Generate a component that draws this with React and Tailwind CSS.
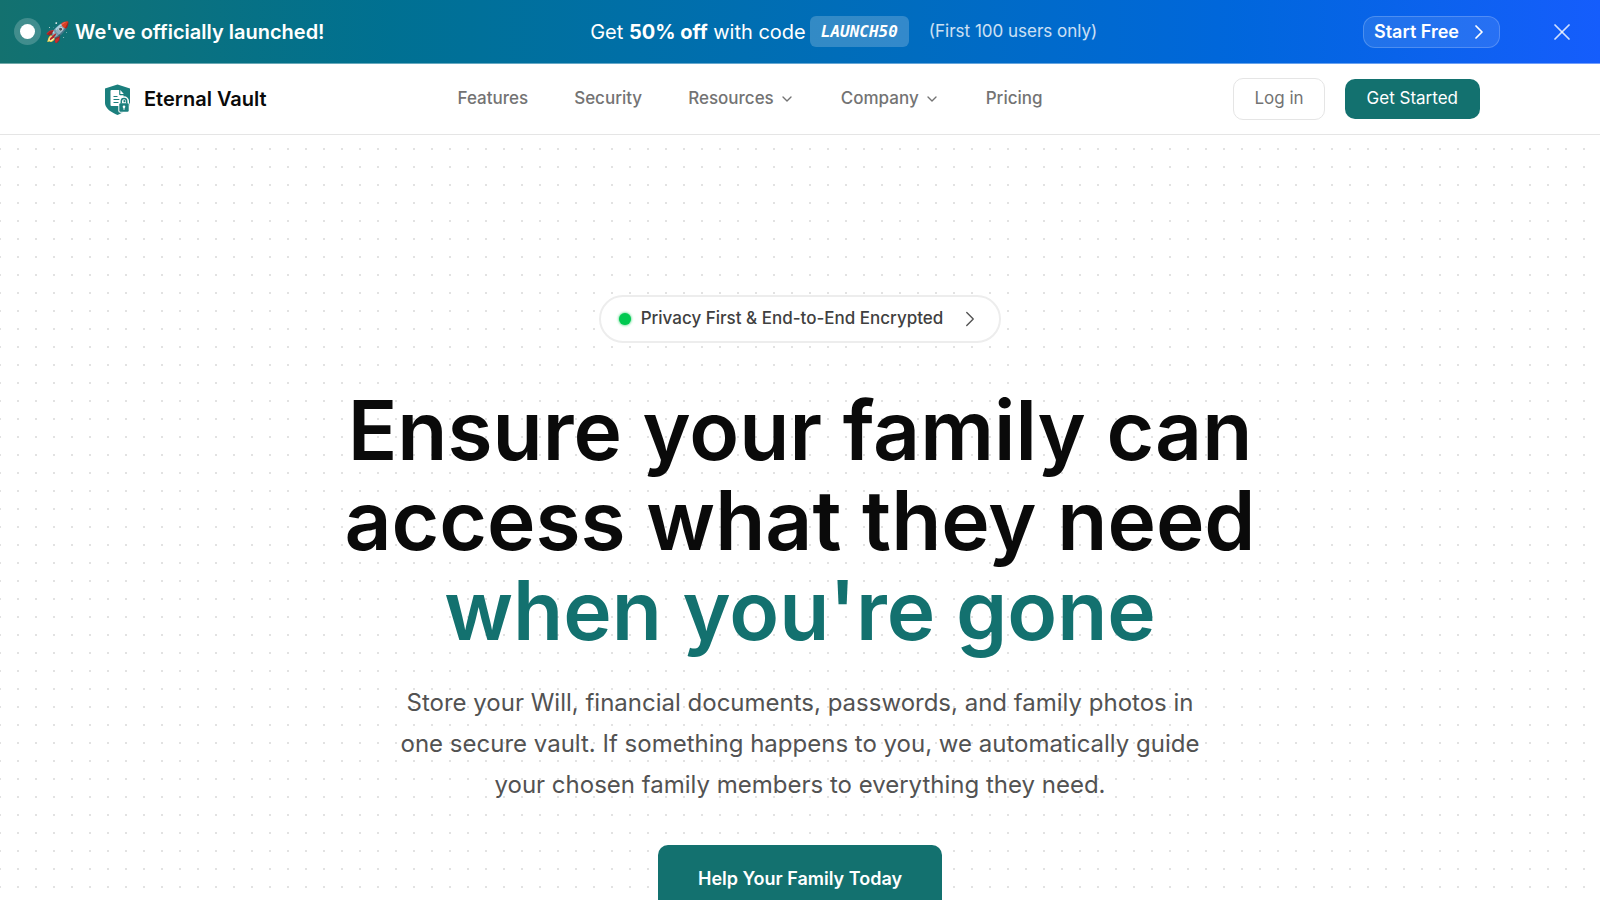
import { ChevronDown, ChevronRight, X } from "lucide-react";

function Logo() {
  return (
    <svg viewBox="0 0 25 31" className="h-[31px] w-[25px]" aria-hidden="true">
      <path d="M12.500 0.500 25 4.500V19c0 5.500-6.500 9.500-12.500 12C6.500 28.500 0 24.500 0 19V4.500Z" fill="#1b7f7d" />
      <path d="M5.500 7a1 1 0 0 1 1-1h7.700v4.200a1 1 0 0 0 1 1h3.300V22H6.500a1 1 0 0 1-1-1Z" fill="#fff" />
      <path d="M15.300 6v4h3.500Z" fill="#fff" />
      <path d="M8.500 12.500h4M8.500 15.500h7M8.500 18.500h5" stroke="#1b7f7d" strokeWidth="1.200" />
      <path d="M15.800 19.500v-2.200a3.200 3.200 0 0 1 6.400 0v2.200" fill="none" stroke="#fff" strokeWidth="3.600" />
      <rect x="13.300" y="18.300" width="11.400" height="10.400" rx="2" fill="#fff" />
      <rect x="14.300" y="19.300" width="9.400" height="8.400" rx="1.200" fill="#1b7f7d" />
      <path d="M16.300 19.500v-2.200a2.700 2.700 0 0 1 5.400 0v2.200" fill="none" stroke="#1b7f7d" strokeWidth="1.500" />
      <circle cx="19" cy="22.700" r="1.300" fill="#fff" />
      <path d="M19 22.700v3" stroke="#fff" strokeWidth="1.100" />
    </svg>
  );
}

function Banner() {
  return (
    <div className="flex h-16 items-center justify-between border-b border-white/40 bg-linear-to-r from-[#13716f] to-[#155dfc] bg-origin-border pr-6 pl-[14px] whitespace-nowrap text-white">
      <div className="flex items-center gap-1">
        <span className="flex size-[27px] items-center justify-center rounded-full bg-white/20">
          <span className="size-[15px] rounded-full bg-white" />
        </span>
        <p className="text-[20px] font-semibold">🚀 We've officially launched!</p>
      </div>
      <div className="flex items-center">
        <p className="text-[20px]">
          Get <strong className="font-bold">50% off</strong> with code
        </p>
        <code className="ml-1 flex h-[31px] items-center rounded-md bg-white/20 px-[11px] font-['DejaVu_Sans_Mono',monospace] text-[16px] font-bold italic">
          LAUNCH50
        </code>
        <span className="ml-5 text-[17px] text-white/80">(First 100 users only)</span>
      </div>
      <div className="flex items-center gap-12">
        <a href="#start" className="flex h-8 items-center gap-2 rounded-xl border border-white/20 bg-white/10 pr-2 pl-[10px] text-[18px] font-semibold">
          Start Free
          <ChevronRight className="size-6" strokeWidth={1.75} />
        </a>
        <button type="button" aria-label="Dismiss" className="text-white/80">
          <X className="size-7" strokeWidth={1.5} />
        </button>
      </div>
    </div>
  );
}

function Header() {
  return (
    <header className="flex h-[71px] items-center justify-between border-b border-[#e5e5e5] bg-white pr-[120px] pl-[105px] text-[17px]">
      <a href="#home" className="flex items-center gap-[14px] text-[20px] font-semibold text-[#0a0a0a]">
        <Logo />
        Eternal Vault
      </a>
      <nav className="flex items-center gap-[46px] font-medium text-[#737373]">
        <a href="#features">Features</a>
        <a href="#security">Security</a>
        <button type="button" className="flex items-center gap-[5px]">
          Resources
          <ChevronDown className="size-4" />
        </button>
        <button type="button" className="flex items-center gap-[5px]">
          Company
          <ChevronDown className="size-4" />
        </button>
        <a href="#pricing">Pricing</a>
      </nav>
      <div className="flex items-center gap-5">
        <a href="#login" className="flex h-[42px] items-center rounded-[10px] border border-[#e5e5e5] px-5 text-[#737373]">
          Log in
        </a>
        <a href="#signup" className="flex h-10 items-center rounded-[10px] bg-[#13716f] px-[22px] text-white">
          Get Started
        </a>
      </div>
    </header>
  );
}

export default function App() {
  return (
    <div className="h-screen overflow-hidden bg-white font-['Inter',sans-serif]">
      <Banner />
      <Header />
      <main className="flex flex-col items-center bg-[radial-gradient(circle,#e2e2e2_1px,transparent_1px)] bg-size-[18px_18px] bg-position-[-9px_5px] pt-40 text-center">
        <a href="#privacy" className="flex h-12 items-center gap-[10px] rounded-full border-2 border-[#ededed] bg-white pr-4 pl-[18px] text-[17px] font-medium text-[#404040]">
          <span className="size-3 rounded-full bg-[#00c950] shadow-[0_0_3px_#00c950]" />
          Privacy First &amp; End-to-End Encrypted
          <ChevronRight className="ml-1 size-[26px] text-[#525252]" strokeWidth={1.25} />
        </a>
        <h1 className="mt-[43px] text-[82px] leading-[90px] font-semibold whitespace-nowrap text-[#0a0a0a]">
          Ensure your family can
          <br />
          access what they need
          <br />
          <span className="text-[#13716f]">when you're gone</span>
        </h1>
        <p className="mt-[26px] max-w-[820px] text-[24px] leading-[41px] text-[#525252]">
          Store your Will, financial documents, passwords, and family photos in one secure vault. If something happens to you, we automatically guide your chosen family members to everything they need.
        </p>
        <a href="#help" className="mt-10 flex h-[66px] items-center rounded-[10px] bg-[#13716f] px-10 text-[18px] font-semibold text-white">
          Help Your Family Today
        </a>
      </main>
    </div>
  );
}
